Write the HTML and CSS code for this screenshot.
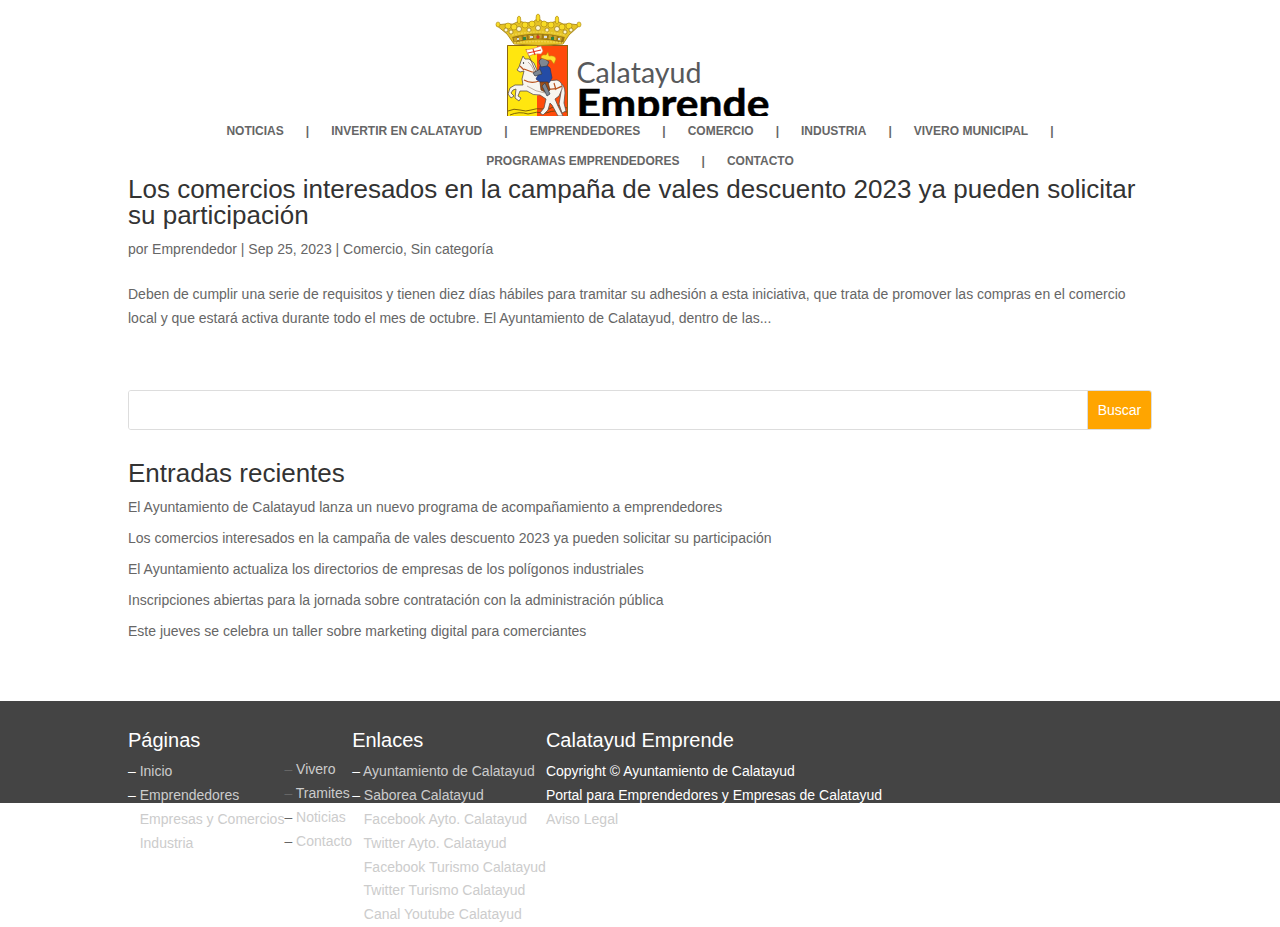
FILE: index.html
```html
<!DOCTYPE html>
<html lang="es">
<head>
<meta charset="utf-8">
<title>Calatayud Emprende</title>
<link rel="stylesheet" href="styles.css">
</head>
<body>
<header class="header">
<svg class="logo" width="290" height="104" viewBox="0 0 290 104" role="img" aria-label="Calatayud Emprende">
  <!-- Shield -->
  <path fill="#ffe60f" d="M17 33h31v71H17z"/><path fill="#ff4b0b" d="M47 33h31v71H47z"/>
  <path fill="none" stroke="#8a6414" d="M17.500 104V33.500h60V104"/>
  <!-- Crown -->
  <path fill="#e5c325" stroke="#a17f12" stroke-width=".8" d="M24 32 17 22 6 13 15 12 23 12 29 9 36 11 43 10 48 6 53 10 60 11 67 9 73 12 81 12 90 13 79 23 73 32Q49 35 24 32Z"/>
  <g fill="#f8dc27" stroke="#a68212" stroke-width=".6">
    <ellipse cx="8" cy="12.500" rx="2" ry="2.500"/><ellipse cx="29" cy="8" rx="1.800" ry="4"/><ellipse cx="48" cy="6" rx="2" ry="4"/><ellipse cx="67" cy="8" rx="1.800" ry="4"/><ellipse cx="89" cy="12.500" rx="2" ry="2.500"/>
    <circle cx="18" cy="14" r="3"/><circle cx="24" cy="15" r="3"/><circle cx="35" cy="13" r="3"/><circle cx="42" cy="12" r="3"/><circle cx="54" cy="12" r="3"/><circle cx="61" cy="13" r="3"/><circle cx="72" cy="15" r="3"/><circle cx="79" cy="14" r="3"/>
  </g>
  <g fill="#fff7d0" stroke="#987813" stroke-width=".7"><circle cx="16" cy="18" r="2"/><circle cx="21" cy="20" r="2"/><circle cx="29" cy="17" r="2.500"/><circle cx="39" cy="18" r="2"/><circle cx="48" cy="16" r="2.500"/><circle cx="57" cy="18" r="2"/><circle cx="67" cy="17" r="2.500"/><circle cx="75" cy="20" r="2"/><circle cx="81" cy="18" r="2"/></g>
  <path fill="none" stroke="#9b7714" stroke-width="6" d="M23 28q25-7 51 0"/>
  <path fill="none" stroke="#caa52a" stroke-width="4" stroke-dasharray="3 2" d="M24 28q25-7 49 0"/>
  <path fill="none" stroke="#f0d348" stroke-width="1.500" stroke-dasharray="2 1" d="M22 23q26-6 53 0M24 31q25-3 49 0"/>
  <path fill="#2f8242" d="M33 25h3v3h-3zM61 25h3v3h-3z"/><path fill="#d93925" d="m48 23 2 2-2 2-2-2z"/><path fill="#d7dde4" d="M40 24h3v2h-3zM54 24h3v2h-3zM27 26h2v2h-2zM68 26h2v2h-2z"/>
  <!-- Ground -->
  <path fill="none" stroke="#5d4309" stroke-width=".8" d="M18 99q6-3 12-1t11 0 12-1 10-2 14 1M20 103q9-4 18-1 8-3 18-1 11-4 21-1"/>
  <!-- Horse -->
  <g fill="#f8f5ef" stroke="#5d5149" stroke-width=".8" stroke-linejoin="round">
    <path d="M69 71Q75 72 75 81L74 91 76 99 72 101 69 92 71 80Z"/>
    <path d="M33 44 35 47 39 47 44 51 47 58 49 65 57 69 67 68Q73 70 72 77L69 84 65 87 68 94 73 104H68L62 93 60 91 58 98 53 103 50 101 54 96 56 87 50 83Q43 84 37 79L30 79 28 84 31 86 29 89 25 86 26 77 23 78 21 81 24 84 21 86 18 82 20 76 25 73 33 73 32 67 34 59 30 60 27 58 29 55 31 49Z"/>
  </g>
  <path fill="none" stroke="#b9521c" stroke-width="1.200" d="M30 54l4 4M34 57l8 3 7 0M34 68q7 4 15 1M58 77q8 1 14-3M64 71l2 7"/>
  <path fill="none" stroke="#b8aba0" d="M38 50q6 5 7 14M37 74q9 6 18 7"/><circle cx="33.500" cy="51" r=".7"/>
  <!-- Banner -->
  <path stroke="#6b4d35" stroke-width=".8" d="m36 37 10 23"/>
  <path fill="#fff" stroke="#d87a50" stroke-width=".6" d="M36 38q7-1 15-4l2 5-2 3q-7-1-12 2Z"/><path fill="none" stroke="#e73624" stroke-width="1.200" d="M38 41l13-3M43 37l2 6"/>
  <!-- Rider -->
  <path fill="#244ca6" stroke="#27346b" stroke-width=".7" d="M50 54 55 52 60 56 62 66 59 71 50 70 46 67 49 61Z"/>
  <path fill="#a04d16" stroke="#56351a" stroke-width=".7" d="M50 70h8l2 8-3 3-6-3Z"/>
  <path fill="#7d8793" stroke="#343b45" stroke-width=".7" d="M49 50q1-5 6-3l4 3-2 4-6 1ZM50 57l-7 4 2 3 7-2ZM55 71l5 11-3 2-5-10Z"/>
  <path fill="#ffe02d" stroke="#bd7a0b" stroke-width=".5" d="M51 46q0-4 5-3l2-3 1 4q6-1 7 3l-2 5-3-4-4 0Z"/>
  <!-- Wordmark, cut by the lower edge of the logo area -->
  <text class="logo-top" x="86.500" y="71" textLength="125" lengthAdjust="spacingAndGlyphs">Calatayud</text>
  <text class="logo-bottom" x="86.500" y="106" textLength="193" lengthAdjust="spacingAndGlyphs">Emprende</text>
</svg>
</header>
<nav class="nav">
<div class="nav-row"><a>NOTICIAS</a><span>|</span><a>INVERTIR EN CALATAYUD</a><span>|</span><a>EMPRENDEDORES</a><span>|</span><a>COMERCIO</a><span>|</span><a>INDUSTRIA</a><span>|</span><a>VIVERO MUNICIPAL</a><span class="last">|</span></div>
<div class="nav-row"><a>PROGRAMAS EMPRENDEDORES</a><span>|</span><a>CONTACTO</a></div>
</nav>
<main class="wrap">
<article>
<h2>Los comercios interesados en la campaña de vales descuento 2023 ya pueden solicitar su participación</h2>
<p class="meta">por Emprendedor | Sep 25, 2023 | Comercio, Sin categoría</p>
<p class="excerpt">Deben de cumplir una serie de requisitos y tienen diez días hábiles para tramitar su adhesión a esta iniciativa, que trata de promover las compras en el comercio local y que estará activa durante todo el mes de octubre. El Ayuntamiento de Calatayud, dentro de las...</p>
</article>
<form class="search"><input type="text" aria-label="Buscar"><button type="button">Buscar</button></form>
<section>
<h2>Entradas recientes</h2>
<ul class="recent">
<li>El Ayuntamiento de Calatayud lanza un nuevo programa de acompañamiento a emprendedores</li>
<li>Los comercios interesados en la campaña de vales descuento 2023 ya pueden solicitar su participación</li>
<li>El Ayuntamiento actualiza los directorios de empresas de los polígonos industriales</li>
<li>Inscripciones abiertas para la jornada sobre contratación con la administración pública</li>
<li>Este jueves se celebra un taller sobre marketing digital para comerciantes</li>
</ul>
</section>
</main>
<footer class="footer">
<div class="wrap columns">
<div class="pages"><h4>Páginas</h4>
<p>– <a>Inicio</a></p><p>– <a>Emprendedores</a></p><p>– <a>Empresas y Comercios</a></p><p>– <a>Industria</a></p></div>
<div class="more"><p>– <a>Vivero</a></p><p>– <a>Tramites</a></p><p>– <a>Noticias</a></p><p>– <a>Contacto</a></p></div>
<div class="links"><h4>Enlaces</h4>
<p>– <a>Ayuntamiento de Calatayud</a></p><p>– <a>Saborea Calatayud</a></p><p>– <a>Facebook Ayto. Calatayud</a></p><p>– <a>Twitter Ayto. Calatayud</a></p><p>– <a>Facebook Turismo Calatayud</a></p><p>– <a>Twitter Turismo Calatayud</a></p><p>– <a>Canal Youtube Calatayud</a></p></div>
<div><h4>Calatayud Emprende</h4>
<p>Copyright © Ayuntamiento de Calatayud</p><p>Portal para Emprendedores y Empresas de Calatayud</p><p><a>Aviso Legal</a></p></div>
</div>
</footer>
</body>
</html>
```
FILE: styles.css
```css
* { box-sizing: border-box; margin: 0; padding: 0; }
html { overflow: hidden; }
body { font: 14px/23.8px "Liberation Sans", Arial, sans-serif; color: #666; background: #fff; height: 927px; overflow: hidden; }
.header { height: 116px; padding: 12px 0 0 490px; }
.logo { display: block; overflow: hidden; }
.logo-top { font: 28px Lato, sans-serif; fill: #58595b; }
.logo-bottom { font: 700 40px Lato, sans-serif; fill: #000; stroke: #000; stroke-width: .5px; }
.nav { font-size: 12px; font-weight: 600; line-height: 30px; }
.nav-row { display: flex; justify-content: center; }
.nav span { margin: 0 22px; }
.nav .last { margin-right: 0; }
.nav a { white-space: nowrap; }
.wrap { width: 1024px; margin: 0 auto; }
h2 { font-size: 26px; line-height: 26px; font-weight: 500; color: #333; }
article h2 { padding-bottom: 9px; }
.meta { line-height: 24px; margin-bottom: 21px; }
.excerpt { line-height: 24px; }
.search { display: flex; height: 40px; margin: 60px 0 30px; border: 1px solid #ddd; border-radius: 3px; overflow: hidden; }
.search input { flex: 1; border: 0; outline: 0; }
.search button { width: 64px; border: 0; border-left: 1px solid #ddd; background: #ffa500; color: #fff; font: 14px "Liberation Sans", sans-serif; }
.recent { list-style: none; padding-top: 10px; }
.recent li { line-height: 23px; margin-bottom: 8px; }
.footer { height: 102px; margin-top: 58px; background: #444; padding-top: 29px; }
.columns { display: flex; align-items: flex-start; color: #fff; }
.columns p { white-space: nowrap; }
.columns a { color: #ccc; }
h4 { font-size: 20px; line-height: 20px; font-weight: 500; padding-bottom: 10.4px; }
.more { padding-top: 28.3px; color: #666; }
```
